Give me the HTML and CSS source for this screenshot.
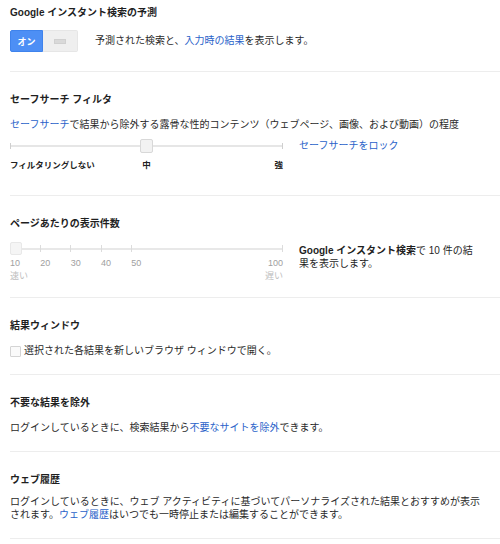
FILE: index.html
```html
<!DOCTYPE html>
<html lang="ja">
<head>
<meta charset="utf-8">
<title>検索設定</title>
<link rel="stylesheet" href="styles.css">
</head>
<body>
<div class="page">
  <section class="sec sec-first">
    <h2 class="sec-title">Google インスタント検索の予測</h2>
    <div class="toggle-row">
      <div class="toggle">
        <span class="toggle-on">オン</span>
        <span class="toggle-off"><span class="toggle-grip"></span></span>
      </div>
      <p class="toggle-text">予測された検索と、<a href="#" class="link">入力時の結果</a>を表示します。</p>
    </div>
  </section>

  <section class="sec sec-safe">
    <h2 class="sec-title">セーフサーチ フィルタ</h2>
    <p class="line"><a href="#" class="link">セーフサーチ</a>で結果から除外する露骨な性的コンテンツ（ウェブページ、画像、および動画）の程度</p>
    <div class="safe-row">
      <div class="slider">
        <div class="track"></div>
        <div class="thumb thumb-mid"></div>
      </div>
      <a href="#" class="link lock">セーフサーチをロック</a>
    </div>
    <div class="safe-labels">
      <span class="lbl-start">フィルタリングしない</span>
      <span class="lbl-mid">中</span>
      <span class="lbl-end">強</span>
    </div>
  </section>

  <section class="sec sec-num">
    <h2 class="sec-title">ページあたりの表示件数</h2>
    <div class="num-row">
      <div class="num-left">
        <div class="slider">
          <div class="track"></div>
          <div class="ticks">
            <span></span><span class="tk"></span><span class="tk"></span><span class="tk"></span><span class="tk"></span><span></span><span></span><span></span><span></span>
          </div>
          <div class="thumb thumb-start"></div>
        </div>
        <div class="num-labels">
          <span>10</span><span>20</span><span>30</span><span>40</span><span>50</span><span></span><span></span><span></span><span class="end">100</span>
        </div>
        <div class="speed-labels">
          <span>速い</span><span>遅い</span>
        </div>
      </div>
      <p class="num-text"><b>Google インスタント検索</b>で 10 件の結果を表示します。</p>
    </div>
  </section>

  <section class="sec">
    <h2 class="sec-title">結果ウィンドウ</h2>
    <label class="check-row"><span class="checkbox"></span>選択された各結果を新しいブラウザ ウィンドウで開く。</label>
  </section>

  <section class="sec">
    <h2 class="sec-title">不要な結果を除外</h2>
    <p class="line">ログインしているときに、検索結果から<a href="#" class="link">不要なサイトを除外</a>できます。</p>
  </section>

  <section class="sec sec-last">
    <h2 class="sec-title">ウェブ履歴</h2>
    <p class="para">ログインしているときに、ウェブ アクティビティに基づいてパーソナライズされた結果とおすすめが表示されます。<a href="#" class="link">ウェブ履歴</a>はいつでも一時停止または編集することができます。</p>
  </section>
</div>
</body>
</html>
```

FILE: styles.css
```css
html, body {
  margin: 0;
  padding: 0;
  background: #ffffff;
}

body {
  font-family: "Liberation Sans", Arial, "Noto Sans CJK JP", sans-serif;
  font-size: 10px;
  color: #2a2a2a;
  width: 500px;
}

.page {
  padding-left: 10px;
}

.sec {
  padding: 21px 0 16px;
  border-bottom: 1px solid #ededed;
}

.sec-first {
  padding: 6px 0 19px;
}

.sec-title {
  margin: 0 0 11px;
  font-size: 10px;
  line-height: 14px;
  font-weight: bold;
  color: #1f1f1f;
}

.sec-first .sec-title {
  margin-bottom: 10px;
}

.link {
  color: #2962c9;
  text-decoration: none;
}

.line {
  margin: 0;
  line-height: 14px;
}

/* toggle */
.toggle-row {
  display: flex;
  align-items: center;
}

.toggle {
  display: flex;
  height: 22px;
  width: 68px;
}

.toggle-on {
  width: 33px;
  background: #4d8ff5;
  border: 1px solid #3f83ec;
  border-radius: 2px 0 0 2px;
  box-sizing: border-box;
  color: #ffffff;
  font-weight: bold;
  font-size: 9px;
  display: flex;
  align-items: center;
  justify-content: center;
}

.toggle-off {
  flex: 1;
  background: #efefef;
  border: 1px solid #e6e6e6;
  border-left: none;
  border-radius: 0 2px 2px 0;
  box-sizing: border-box;
  display: flex;
  align-items: center;
  justify-content: center;
}

.toggle-grip {
  width: 12px;
  height: 5px;
  background: #d9d9d9;
  border: 1px solid #d0d0d0;
  box-sizing: border-box;
}

.toggle-text {
  margin: 0 0 0 17px;
  line-height: 14px;
}

/* sliders */
.slider {
  position: relative;
  width: 273px;
  height: 14px;
  flex: none;
}

.track {
  position: absolute;
  left: 0;
  right: 0;
  top: 6px;
  height: 2px;
  background: #e8e8e8;
}

.sec-safe .track {
  border-left: 1px solid #cfcfcf;
  border-right: 1px solid #cfcfcf;
  top: 4px;
  height: 6px;
  background: linear-gradient(#e6e6e6, #e6e6e6) center / 100% 2px no-repeat;
  box-sizing: border-box;
}

.thumb {
  position: absolute;
  top: 0;
  width: 13px;
  height: 14px;
  box-sizing: border-box;
  border-radius: 2px;
  background: #f2f2f2;
  border: 1px solid #d8d8d8;
}

.thumb-mid {
  left: 130px;
}

.thumb-start {
  left: 0;
  width: 12px;
  height: 13px;
  background: #f5f5f5;
  border-color: #e8e8e8;
}

.ticks {
  position: absolute;
  left: 0;
  right: 0;
  top: 3px;
  height: 7px;
  display: grid;
  grid-template-columns: repeat(9, 1fr);
  border-right: 1px solid #dcdcdc;
}

.ticks .tk {
  border-left: 1px solid #dcdcdc;
}

.sec-safe {
  padding-bottom: 24px;
}

.safe-row {
  display: flex;
  align-items: center;
  margin-top: 7px;
}

.lock {
  margin-left: 16px;
  line-height: 14px;
}

.safe-labels {
  width: 273px;
  margin-top: 6px;
  display: grid;
  grid-template-columns: 1fr auto 1fr;
  font-size: 8.5px;
  line-height: 12px;
  font-weight: bold;
  color: #222222;
}

.lbl-start {
  justify-self: start;
}

.lbl-end {
  justify-self: end;
}

.num-row {
  display: flex;
  align-items: flex-start;
}

.num-left {
  width: 273px;
}

.num-labels {
  display: grid;
  grid-template-columns: repeat(9, 1fr);
  margin-top: 1px;
  line-height: 12px;
  font-size: 9px;
  color: #a0a0a0;
}

.num-labels .end {
  text-align: right;
}

.speed-labels {
  display: flex;
  justify-content: space-between;
  line-height: 14px;
  font-size: 9px;
  color: #c0c0c0;
}

.num-text {
  margin: 2px 0 0 16px;
  width: 178px;
  line-height: 13px;
  color: #1f1f1f;
}

.num-text b {
  font-weight: bold;
}

.sec-num {
  padding-bottom: 14px;
}

/* checkbox */
.check-row {
  display: flex;
  align-items: center;
  line-height: 14px;
}

.checkbox {
  width: 11px;
  height: 11px;
  box-sizing: border-box;
  border: 1px solid #d4d4d4;
  border-radius: 1px;
  background: #fafafa;
  margin-right: 3px;
}

.para {
  margin: -3px 0 0;
  line-height: 13px;
  width: 475px;
}

.sec-last {
  padding-bottom: 17px;
}
```
